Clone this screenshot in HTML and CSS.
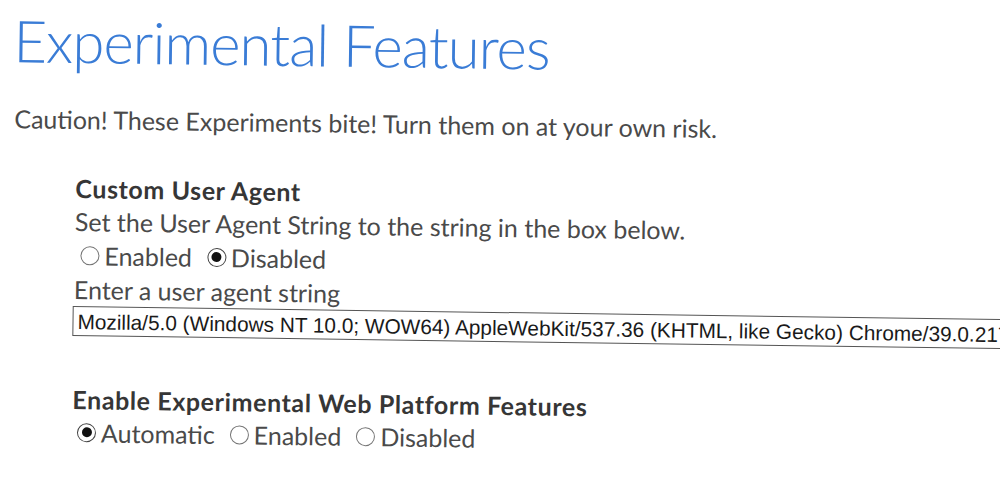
FILE: index.html
```html
<!DOCTYPE html>
<html lang="en">
  <head>
    <meta charset="UTF-8" />
    <meta name="viewport" content="width=device-width, initial-scale=1.0" />
    <title>about:flags</title>
    <link rel="stylesheet" href="styles.css">
  </head>
  <body>
    <div id="page">
      <h1 id="title">Experimental Features</h1>
      <p id="caution">Caution! These Experiments bite! Turn them on at your own risk.</p>

      <div class="flag">
        <h2 class="flagName">Custom User Agent</h2>
        <p class="flagDesc">Set the User Agent String to the string in the box below.</p>
        <div class="choices">
          <label class="choice"><span class="radio"></span>Enabled</label>
          <label class="choice"><span class="radio checked"></span>Disabled</label>
        </div>
        <p class="flagDesc">Enter a user agent string</p>
        <div class="uaBox">Mozilla/5.0 (Windows NT 10.0; WOW64) AppleWebKit/537.36 (KHTML, like Gecko) Chrome/39.0.2171.71 Safari/537.36 Edge/12.0</div>
      </div>

      <div class="flag second">
        <h2 class="flagName">Enable Experimental Web Platform Features</h2>
        <div class="choices">
          <label class="choice"><span class="radio checked"></span>Automatic</label>
          <label class="choice"><span class="radio"></span>Enabled</label>
          <label class="choice"><span class="radio"></span>Disabled</label>
        </div>
      </div>
    </div>
  </body>
</html>
```

FILE: styles.css
```css
body {
  margin: 0;
  background-color: #ffffff;
  font-family: Lato, "Open Sans", sans-serif;
  color: #4a4a4a;
  overflow: hidden;
}

/* the shot is a photo of a screen, tilted a little */
#page {
  padding: 5px 0 0 17px;
  transform: rotate(0.8deg);
  transform-origin: 0 0;
}

#title {
  margin: 0 0 0 -3px;
  font-size: 58px;
  font-weight: 300;
  letter-spacing: -0.9px;
  color: #3a7cd6;
  line-height: 70px;
}

#caution {
  margin: 27px 0 0 -1px;
  font-size: 25px;
  line-height: 32px;
}

.flag {
  margin: 38px 0 0 61px;
}

.flagName {
  margin: 0;
  font-size: 25px;
  font-weight: 700;
  letter-spacing: 0.6px;
  color: #363636;
  line-height: 31px;
}

.flagDesc {
  margin: 0;
  font-size: 25px;
  line-height: 34px;
}

.choices {
  display: flex;
  gap: 15px;
  padding-left: 6px;
  font-size: 25px;
  line-height: 34px;
}

.choice {
  display: flex;
  align-items: center;
  gap: 5px;
}

.radio {
  box-sizing: border-box;
  width: 19px;
  height: 19px;
  border: 1.5px solid #757575;
  border-radius: 50%;
  display: flex;
  align-items: center;
  justify-content: center;
}

.radio.checked {
  border-color: #444444;
}

.radio.checked::after {
  content: "";
  width: 10px;
  height: 10px;
  border-radius: 50%;
  background-color: #111111;
}

.uaBox {
  margin-left: -1px;
  width: 1000px;
  border: 1px solid #555555;
  padding: 2px 4px 0;
  white-space: nowrap;
  overflow: hidden;
  font-family: "Liberation Sans", Arial, sans-serif;
  font-size: 20.8px;
  color: #1a1a1a;
  line-height: 26px;
}

.second {
  margin-top: 48px;
}

.second .choices {
  padding-left: 5px;
}
```
